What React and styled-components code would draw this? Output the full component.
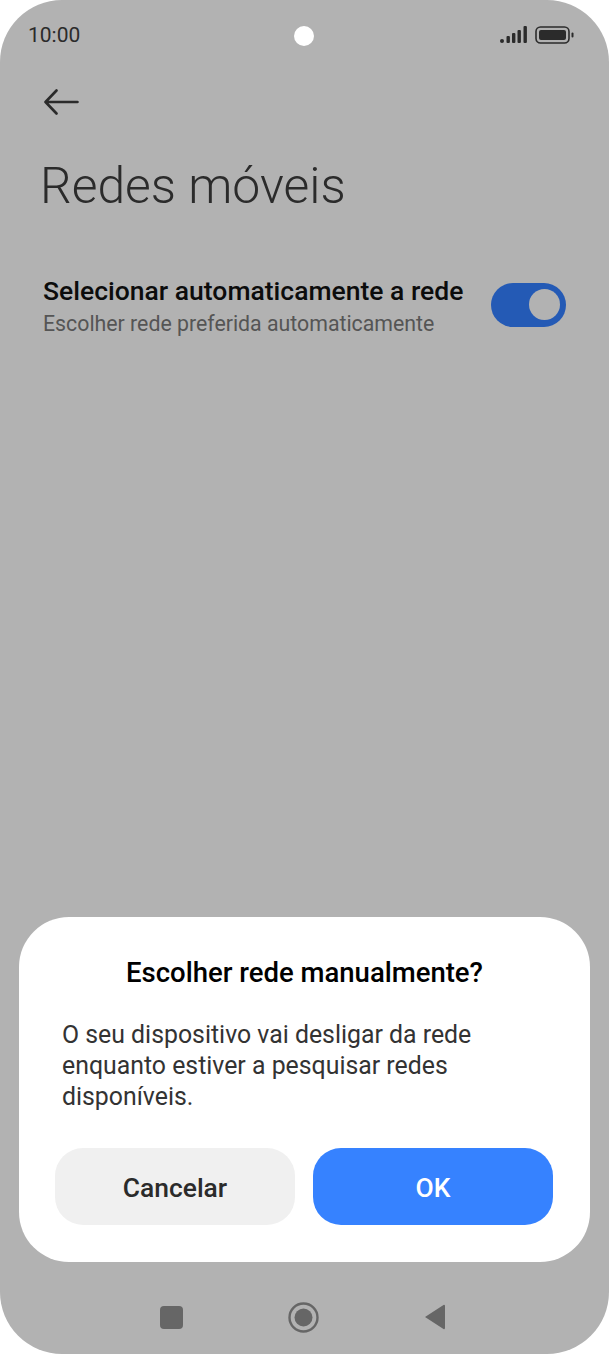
import React from "react";
import styled, { createGlobalStyle } from "styled-components";

const Global = createGlobalStyle`
  html, body { margin: 0; padding: 0; background: #fff; }
  body { font-family: Roboto, "Liberation Sans", sans-serif; }
`;
const Phone = styled.div`
  width: 609px; height: 1354px; background: #b2b2b2; border-radius: 62px;
  display: flex; flex-direction: column; overflow: hidden;
`;
const StatusBar = styled.div`
  height: 20px; margin-top: 26px; padding: 0 28px;
  display: grid; grid-template-columns: 1fr 20px 1fr; align-items: center;
`;
const Time = styled.span`font-size: 21px; line-height: 20px; color: #2b2b2b; margin-top: -3px;`;
const Camera = styled.div`width: 20px; height: 20px; border-radius: 50%; background: #fff; margin-left: -1px;`;
const StatusIcons = styled.div`display: flex; justify-content: flex-end; align-items: center; gap: 8px; padding-right: 7px; margin-top: -2px;`;
const BackRow = styled.div`padding: 43px 0 0 44px; height: 32px; display: flex;`;
const Title = styled.h1`
  margin: 37px 0 0 40px; font-size: 49.8px; line-height: 56px; font-weight: 300; color: #2b2b2b;
`;
const Row = styled.div`
  margin-top: 61px; padding: 0 43px; display: flex; align-items: center; justify-content: space-between;
`;
const RowText = styled.div`display: flex; flex-direction: column;`;
const RowTitle = styled.div`font-size: 26.5px; line-height: 32px; font-weight: 500; color: #0c0c0c;`;
const RowSub = styled.div`font-size: 21.3px; line-height: 33px; color: #555;`;
const Toggle = styled.div`
  width: 75px; height: 44px; box-sizing: border-box; border-radius: 22px; background: #245ab5;
  display: flex; align-items: center; justify-content: flex-end; padding-right: 6px; margin-top: -6px;
`;
const Knob = styled.div`width: 31px; height: 31px; border-radius: 50%; background: #b2b2b2;`;
const Spacer = styled.div`flex: 1;`;
const Dialog = styled.div`
  margin: 0 19px; height: 345px; box-sizing: border-box; background: #fff; border-radius: 50px;
  padding: 38px 36px 37px; display: flex; flex-direction: column;
`;
const DialogTitle = styled.div`
  font-size: 27.5px; line-height: 36px; font-weight: 500; color: #000; text-align: center;
`;
const DialogBody = styled.div`
  margin-top: 28px; padding: 0 7px; font-size: 24.85px; line-height: 31px; color: #333;
`;
const Buttons = styled.div`margin-top: auto; display: grid; grid-template-columns: 240px 240px; gap: 18px;`;
const Button = styled.div`
  height: 77px; box-sizing: border-box; padding-top: 3px; border-radius: 28px; display: flex; align-items: center; justify-content: center;
  font-size: 26.4px; font-weight: 500;
  background: ${p => (p.$primary ? "#3682ff" : "#f0f0f0")};
  color: ${p => (p.$primary ? "#fff" : "#2b2b2b")};
`;
const NavBar = styled.div`
  height: 92px; box-sizing: border-box; padding: 18px 164px 0 160px; display: flex; align-items: center; justify-content: space-between;
`;

const Signal = () => (
  <svg width="27" height="18" viewBox="0 0 27 18" fill="#2b2b2b">
    <rect x="0" y="13" width="4" height="4" rx="2" />
    <rect x="6.5" y="10" width="3.4" height="7" rx="1" />
    <rect x="12" y="7" width="3.4" height="10" rx="1" />
    <rect x="17.5" y="4" width="3.4" height="13" rx="1" />
    <rect x="23.5" y="0" width="3.4" height="17" rx="1" />
  </svg>
);
const Battery = () => (
  <svg width="39" height="18" viewBox="0 0 39 18">
    <rect x="1" y="1" width="33" height="16" rx="4.5" fill="none" stroke="#2b2b2b" strokeWidth="1.6" />
    <rect x="4" y="4" width="27" height="10" rx="2" fill="#2b2b2b" />
    <rect x="36.5" y="6.5" width="2" height="5" rx="1" fill="#2b2b2b" />
  </svg>
);
const BackArrow = () => (
  <svg width="36" height="26" viewBox="0 0 36 26" fill="none" stroke="#2b2b2b" strokeWidth="2.6" strokeLinecap="round" strokeLinejoin="round">
    <path d="M33.5 13H2M12.5 1.5L1.5 13l11 11.5" />
  </svg>
);
const NavSquare = () => (
  <svg width="23" height="23" viewBox="0 0 23 23"><rect width="23" height="23" rx="4" fill="#666" /></svg>
);
const NavHome = () => (
  <svg width="31" height="31" viewBox="0 0 31 31">
    <circle cx="15.5" cy="15.5" r="14" fill="none" stroke="#666" strokeWidth="2.4" />
    <circle cx="15.5" cy="15.5" r="9" fill="#666" />
  </svg>
);
const NavBack = () => (
  <svg width="21" height="26" viewBox="0 0 21 26"><path d="M19.5 1L1 13l18.5 12a1 1 0 0 0 1.5-1V2a1 1 0 0 0-1.5-1z" fill="#666" /></svg>
);

export default function App() {
  return (
    <>
      <Global />
      <Phone>
        <StatusBar>
          <Time>10:00</Time>
          <Camera />
          <StatusIcons><Signal /><Battery /></StatusIcons>
        </StatusBar>
        <BackRow><BackArrow /></BackRow>
        <Title>Redes móveis</Title>
        <Row>
          <RowText>
            <RowTitle>Selecionar automaticamente a rede</RowTitle>
            <RowSub>Escolher rede preferida automaticamente</RowSub>
          </RowText>
          <Toggle><Knob /></Toggle>
        </Row>
        <Spacer />
        <Dialog>
          <DialogTitle>Escolher rede manualmente?</DialogTitle>
          <DialogBody>O seu dispositivo vai desligar da rede enquanto estiver a pesquisar redes disponíveis.</DialogBody>
          <Buttons>
            <Button>Cancelar</Button>
            <Button $primary>OK</Button>
          </Buttons>
        </Dialog>
        <NavBar><NavSquare /><NavHome /><NavBack /></NavBar>
      </Phone>
    </>
  );
}
